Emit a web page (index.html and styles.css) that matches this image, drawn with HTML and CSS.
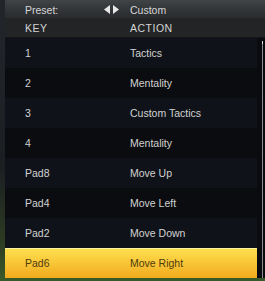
FILE: index.html
```html
<!DOCTYPE html>
<html>
<head>
<meta charset="utf-8">
<link rel="stylesheet" href="styles.css">
</head>
<body>
<div class="panel">
  <div class="preset">
    <span class="label">Preset:</span>
    <span class="arrows">
      <svg width="15" height="9" viewBox="0 0 15 9"><polygon points="6,0 6,9 0,4.5" fill="#e8e8e8"/><polygon points="9,0 9,9 15,4.5" fill="#e8e8e8"/></svg>
    </span>
    <span class="value">Custom</span>
  </div>
  <div class="head">
    <span class="key">KEY</span>
    <span class="action">ACTION</span>
  </div>
  <div class="body">
    <div class="list">
      <div class="row"><span class="key">1</span><span class="action">Tactics</span></div>
      <div class="row alt"><span class="key">2</span><span class="action">Mentality</span></div>
      <div class="row"><span class="key">3</span><span class="action">Custom Tactics</span></div>
      <div class="row alt"><span class="key">4</span><span class="action">Mentality</span></div>
      <div class="row"><span class="key">Pad8</span><span class="action">Move Up</span></div>
      <div class="row alt"><span class="key">Pad4</span><span class="action">Move Left</span></div>
      <div class="row"><span class="key">Pad2</span><span class="action">Move Down</span></div>
      <div class="row sel"><span class="key">Pad6</span><span class="action">Move Right</span></div>
    </div>
    <div class="scroll"><div class="thumb"></div></div>
  </div>
</div>
</body>
</html>
```
FILE: styles.css
```css
html, body {
  margin: 0;
  padding: 0;
}
body {
  width: 265px;
  height: 281px;
  overflow: hidden;
  font-family: "Liberation Sans", Arial, sans-serif;
  font-size: 10.5px;
  background: linear-gradient(180deg, #22252a 0%, #1c1f22 60%, #2c3a22 85%, #3a5a2a 100%);
}
.panel {
  margin-left: 5px;
  width: 260px;
  background: #0c0d12;
}
.preset {
  height: 18px;
  display: grid;
  grid-template-columns: 79px 26px 1fr;
  align-items: center;
  padding-left: 20px;
  padding-top: 1px;
  box-sizing: border-box;
  background: linear-gradient(180deg, #414447 0%, #323538 55%, #2a2c2f 100%);
  color: #d6d6d6;
}
.arrows {
  display: flex;
  align-items: center;
  height: 17px;
}
.head {
  height: 19px;
  display: grid;
  grid-template-columns: 105px 1fr;
  align-items: center;
  padding-left: 20px;
  background: #232426;
  color: #d4d4d4;
  letter-spacing: 0.5px;
  border-bottom: 1px solid #141518;
}
.body {
  display: flex;
  height: 240px;
  background: #0b0c11;
}
.list {
  width: 252px;
  display: flex;
  flex-direction: column;
}
.row {
  height: 30px;
  display: grid;
  grid-template-columns: 105px 1fr;
  align-items: center;
  padding-left: 20px;
  color: #d2d2d2;
  background: #101219;
}
.row.alt {
  background: #0b0c10;
}
.row.sel {
  background: linear-gradient(180deg, #fde04e 0%, #f9c93a 45%, #f1aa1c 100%);
  color: #4f3c0c;
  box-shadow: inset 0 1px 0 #fff2a0;
}
.scroll {
  width: 8px;
  position: relative;
  background: #0a0b0e;
}
.thumb {
  position: absolute;
  left: 5px;
  top: 3px;
  width: 1px;
  height: 234px;
  background: #8a8c90;
  border-top: 3px solid #e0e0e0;
}
```
